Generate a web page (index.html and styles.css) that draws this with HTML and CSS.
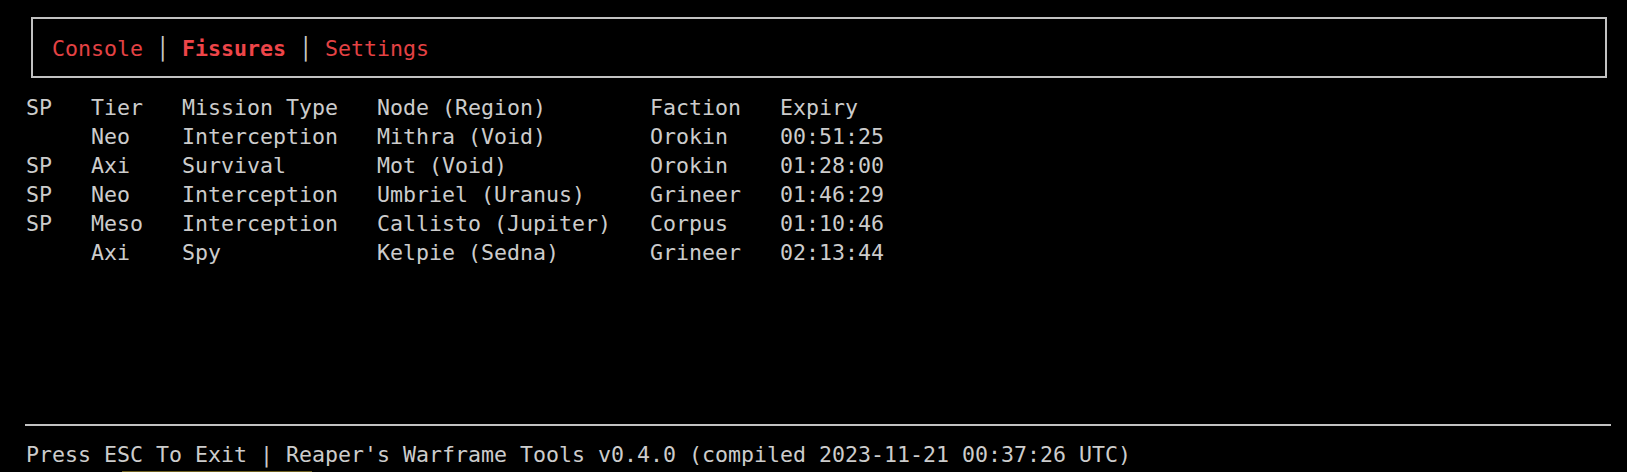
FILE: index.html
```html
<!DOCTYPE html>
<html lang="en">
<head>
<meta charset="utf-8">
<title>Reaper's Warframe Tools</title>
<link rel="stylesheet" href="styles.css">
</head>
<body>
<div class="term">
  <nav class="tabs">
    <span class="tab">Console</span><span class="sep"> │ </span><span class="tab active">Fissures</span><span class="sep"> │ </span><span class="tab">Settings</span>
  </nav>
  <div class="grid">
    <span>SP</span><span>Tier</span><span>Mission Type</span><span>Node (Region)</span><span>Faction</span><span>Expiry</span>
    <span></span><span>Neo</span><span>Interception</span><span>Mithra (Void)</span><span>Orokin</span><span>00:51:25</span>
    <span>SP</span><span>Axi</span><span>Survival</span><span>Mot (Void)</span><span>Orokin</span><span>01:28:00</span>
    <span>SP</span><span>Neo</span><span>Interception</span><span>Umbriel (Uranus)</span><span>Grineer</span><span>01:46:29</span>
    <span>SP</span><span>Meso</span><span>Interception</span><span>Callisto (Jupiter)</span><span>Corpus</span><span>01:10:46</span>
    <span></span><span>Axi</span><span>Spy</span><span>Kelpie (Sedna)</span><span>Grineer</span><span>02:13:44</span>
  </div>
  <footer class="footer">
    <div class="rule"></div>
    <div class="status">Press ESC To Exit | Reaper's Warframe Tools v0.4.0 (compiled 2023-11-21 00:37:26 UTC)</div>
    <div class="mark"></div>
  </footer>
</div>
</body>
</html>
```
FILE: styles.css
```css
html, body {
  margin: 0;
  padding: 0;
  background: #000;
}
.term {
  box-sizing: border-box;
  height: 472px;
  display: flex;
  flex-direction: column;
  padding-top: 5px;
  font-family: "DejaVu Sans Mono", "Liberation Mono", monospace;
  font-size: 21.6px;
  line-height: 29px;
  color: #cccccc;
}
.tabs {
  box-sizing: border-box;
  width: 1576px;
  height: 61px;
  margin: 12px 0 15px 31px;
  padding: 15px 0 0 19px;
  border: 2px solid #c2c2c2;
  white-space: nowrap;
}
.tab {
  color: #e44244;
}
.tab.active {
  font-weight: bold;
  color: #ee4549;
}
.sep {
  color: #c8c8c8;
  white-space: pre;
}
.grid {
  display: grid;
  grid-template-columns: 65px 91px 195px 273px 130px auto;
  grid-auto-rows: 29px;
  padding-left: 26px;
  white-space: pre;
}
.footer {
  margin-top: auto;
  display: flex;
  flex-direction: column;
}
.rule {
  height: 2px;
  width: 1586px;
  margin-left: 25px;
  background: #c2c2c2;
}
.status {
  padding: 14px 0 0 26px;
  white-space: pre;
}
.mark {
  width: 190px;
  height: 1px;
  margin: 2px 0 0 122px;
  background: #6f6120;
}
```
